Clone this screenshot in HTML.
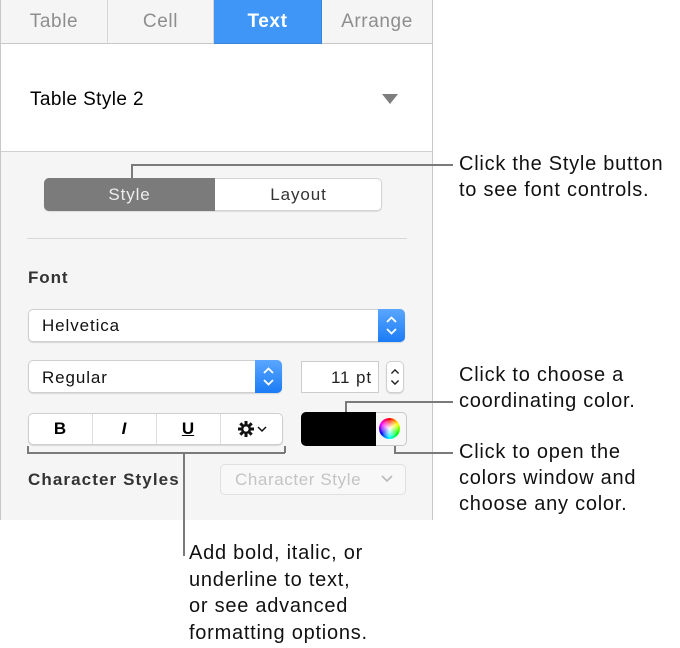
<!DOCTYPE html>
<html><head><style>
*{margin:0;padding:0;box-sizing:border-box}
body{width:680px;height:648px;background:#fff;position:relative;font-family:"Liberation Sans",Arial,sans-serif;overflow:hidden}
.a{position:absolute}
.panel{left:0;top:0;width:433px;height:520px;background:#f5f5f5;border-left:1px solid #c8c8c8;border-right:1px solid #c8c8c8}
.tab{top:0;height:44px;font-size:19px;color:#8e8e8e;text-align:center;line-height:44px;border-right:1px solid #d5d5d5;border-bottom:1px solid #c8c8c8;background:#f5f5f5;letter-spacing:.6px}
.t{font-size:20px;color:#111;line-height:26px;letter-spacing:.75px;white-space:nowrap}
.p{letter-spacing:.9px;white-space:nowrap}
.box{background:#fff;border:1px solid #cfcfcf;border-radius:5px;box-shadow:0 1px 1px rgba(0,0,0,.12)}
.ln{background:#7a7a7a}
.ud{background:linear-gradient(#5aa6ff,#1b7cf5);border-radius:0 5px 5px 0}
</style></head><body>
<div class="a panel"></div>
<div class="a tab" style="left:1px;width:107px">Table</div>
<div class="a tab" style="left:108px;width:106px">Cell</div>
<div class="a tab" style="left:214px;width:108px;background:#3f96f7;color:#fff;border-color:#3585e0;font-weight:bold">Text</div>
<div class="a tab" style="left:322px;width:110px;border-right:none">Arrange</div>
<div class="a" style="left:1px;top:44px;width:431px;height:108px;background:#fff;border-bottom:1px solid #d0d0d0"></div>
<div class="a p" style="left:30px;top:89px;font-size:19px;color:#000;letter-spacing:.4px">Table Style 2</div>
<div class="a" style="left:382px;top:94px;width:0;height:0;border-left:8px solid transparent;border-right:8px solid transparent;border-top:10px solid #7d7d7d"></div>
<div class="a" style="left:44px;top:178px;width:338px;height:33px;border-radius:5px;background:#fff;border:1px solid #d4d4d4;box-shadow:0 1px 1px rgba(0,0,0,.1)"></div>
<div class="a p" style="left:44px;top:178px;width:171px;height:33px;border-radius:5px 0 0 5px;background:#7b7b7b;color:#eee;font-size:17px;line-height:33px;text-align:center">Style</div>
<div class="a p" style="left:215px;top:178px;width:167px;height:33px;color:#333;font-size:17px;line-height:33px;text-align:center">Layout</div>
<div class="a" style="left:27px;top:238px;width:380px;height:1px;background:#d8d8d8"></div>
<div class="a p" style="left:28px;top:268px;font-size:17px;font-weight:bold;color:#333">Font</div>
<svg width="0" height="0" style="position:absolute"><defs><symbol id="ud" viewBox="0 0 27 33"><path d="M9 13 L13.5 8.5 L18 13 M9 20 L13.5 24.5 L18 20" fill="none" stroke="#fff" stroke-width="1.8"/></symbol><symbol id="ud2" viewBox="0 0 18 32"><path d="M5 12 L9 8 L13 12 M5 20 L9 24 L13 20" fill="none" stroke="#222" stroke-width="1.6"/></symbol></defs></svg>
<div class="a box" style="left:28px;top:309px;width:377px;height:33px"></div>
<div class="a p" style="left:42px;top:316px;font-size:17px;color:#111">Helvetica</div>
<svg class="a ud" style="left:378px;top:309px" width="27" height="33"><use href="#ud"/></svg>
<div class="a box" style="left:28px;top:360px;width:254px;height:33px"></div>
<div class="a p" style="left:42px;top:368px;font-size:17px;color:#111">Regular</div>
<svg class="a ud" style="left:255px;top:360px" width="27" height="33"><use href="#ud"/></svg>
<div class="a p" style="left:301px;top:361px;width:78px;height:32px;background:#fff;border:1px solid #ccc;font-size:17px;text-align:right;padding-right:6px;line-height:32px;color:#222">11 pt</div>
<svg class="a box" style="left:386px;top:361px" width="18" height="32"><use href="#ud2"/></svg>
<div class="a box" style="left:28px;top:413px;width:255px;height:32px"></div>
<div class="a" style="left:92px;top:414px;width:1px;height:30px;background:#ddd"></div>
<div class="a" style="left:156px;top:414px;width:1px;height:30px;background:#ddd"></div>
<div class="a" style="left:220px;top:414px;width:1px;height:30px;background:#ddd"></div>
<div class="a" style="left:28px;top:419px;width:64px;text-align:center;font-size:17px;font-weight:bold">B</div>
<div class="a" style="left:92px;top:419px;width:64px;text-align:center;font-size:17px;font-weight:bold;font-style:italic">I</div>
<div class="a" style="left:156px;top:419px;width:64px;text-align:center;font-size:17px;font-weight:bold;text-decoration:underline">U</div>
<svg class="a" style="left:236px;top:418px" width="36" height="22" viewBox="0 0 36 22"><g transform="translate(10,11)" stroke="#111" stroke-width="3"><line x1="0" y1="-8" x2="0" y2="8"/><line x1="-8" y1="0" x2="8" y2="0"/><line x1="-5.7" y1="-5.7" x2="5.7" y2="5.7"/><line x1="-5.7" y1="5.7" x2="5.7" y2="-5.7"/></g><circle cx="10" cy="11" r="5" fill="#111"/><circle cx="10" cy="11" r="2.6" fill="#fff"/><path d="M22 9 L26 13 L30 9" fill="none" stroke="#111" stroke-width="1.5"/></svg>
<div class="a" style="left:301px;top:412px;width:106px;height:34px;border-radius:5px;background:#f7f7f7;border:1px solid #c8c8c8"></div>
<div class="a" style="left:301px;top:412px;width:75px;height:34px;border-radius:5px 0 0 5px;background:#000"></div>
<div class="a" style="left:379px;top:418px;width:21px;height:21px;border-radius:50%;background:conic-gradient(red,#ff0,lime,cyan,blue,#f0f,red);"></div>
<div class="a" style="left:381px;top:420px;width:17px;height:17px;border-radius:50%;background:radial-gradient(#fff,rgba(255,255,255,.2) 70%,rgba(255,255,255,0))"></div>
<div class="a p" style="left:28px;top:470px;font-size:17px;font-weight:bold;color:#333;letter-spacing:1.1px">Character Styles</div>
<div class="a p" style="left:220px;top:464px;width:186px;height:31px;border:1px solid #e0e0e0;border-radius:5px;background:#f8f8f8;font-size:17px;color:#c4c4c4;line-height:30px;padding-left:14px;letter-spacing:.6px">Character Style</div>
<svg class="a" style="left:380px;top:474px" width="14" height="10"><path d="M2 2 L7 7 L12 2" fill="none" stroke="#bbb" stroke-width="1.6"/></svg>
<div class="a ln" style="left:131px;top:164px;width:322px;height:1.5px"></div>
<div class="a ln" style="left:131px;top:164px;width:1.5px;height:14px"></div>
<div class="a ln" style="left:345px;top:401px;width:108px;height:1.5px"></div>
<div class="a ln" style="left:345px;top:401px;width:1.5px;height:11px"></div>
<div class="a ln" style="left:394px;top:446px;width:1.5px;height:7px"></div>
<div class="a ln" style="left:394px;top:452px;width:59px;height:1.5px"></div>
<div class="a ln" style="left:27px;top:452px;width:258px;height:1.5px"></div>
<div class="a ln" style="left:27px;top:446px;width:1.5px;height:7px"></div>
<div class="a ln" style="left:284px;top:446px;width:1.5px;height:7px"></div>
<div class="a ln" style="left:183px;top:452px;width:1.5px;height:104px"></div>
<div class="a t" style="left:459px;top:151px">Click the Style button<br>to see font controls.</div>
<div class="a t" style="left:459px;top:362px">Click to choose a<br>coordinating color.</div>
<div class="a t" style="left:459px;top:439px">Click to open the<br>colors window and<br>choose any color.</div>
<div class="a t" style="left:189px;top:540px;line-height:26.7px">Add bold, italic, or<br>underline to text,<br>or see advanced<br>formatting options.</div>
</body></html>
